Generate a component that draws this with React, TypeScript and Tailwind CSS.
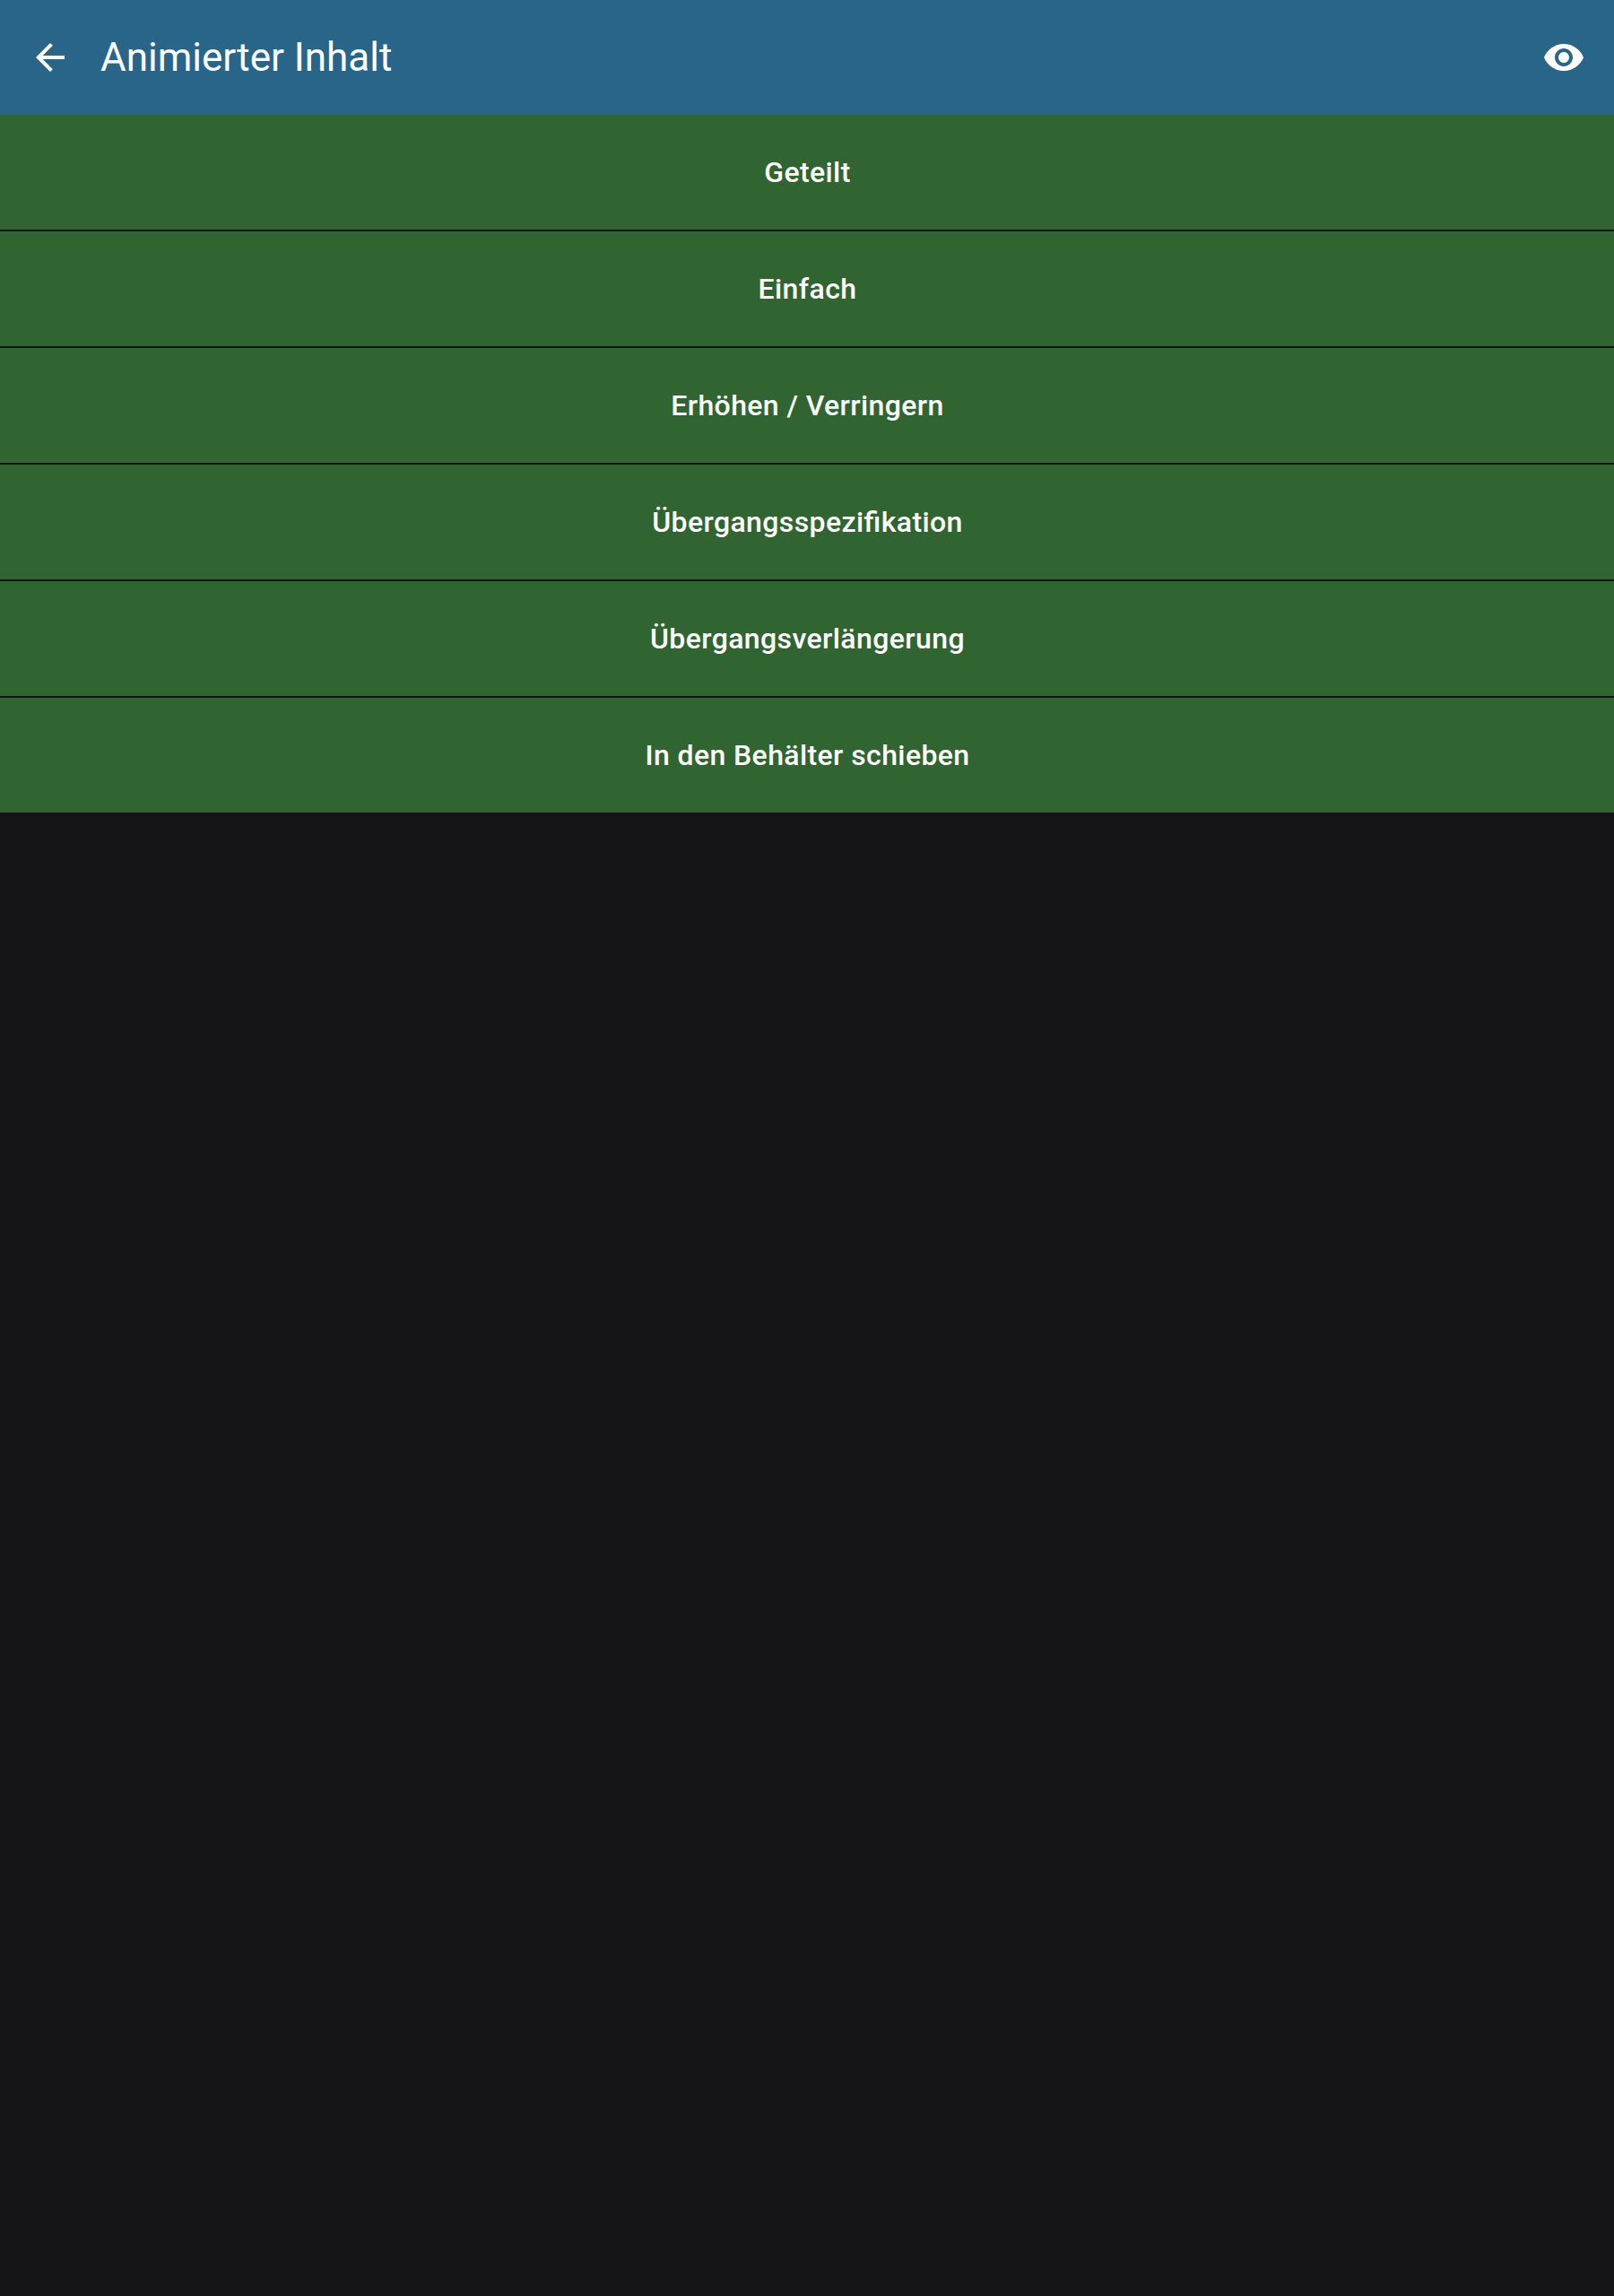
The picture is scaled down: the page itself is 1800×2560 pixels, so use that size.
const items = [
  "Geteilt",
  "Einfach",
  "Erhöhen / Verringern",
  "Übergangsspezifikation",
  "Übergangsverlängerung",
  "In den Behälter schieben",
];

export default function App() {
  return (
    <div className="h-[2560px] w-[1800px] bg-[#141318] font-['Roboto',sans-serif] text-white">
      <header className="flex h-32 items-center bg-[#286589] px-8">
        <svg className="size-12" viewBox="0 0 24 24" fill="currentColor">
          <path d="M20 11H7.83l5.59-5.59L12 4l-8 8 8 8 1.41-1.41L7.83 13H20v-2z" />
        </svg>
        <h1 className="ml-8 text-[44px] leading-none font-normal">Animierter Inhalt</h1>
        <svg className="ml-auto size-12" viewBox="0 0 24 24" fill="currentColor">
          <path d="M12 4.5C7 4.5 2.73 7.61 1 12c1.73 4.39 6 7.5 11 7.5s9.27-3.11 11-7.5c-1.73-4.39-6-7.5-11-7.5zM12 17c-2.76 0-5-2.24-5-5s2.24-5 5-5 5 2.24 5 5-2.24 5-5 5zm0-8c-1.66 0-3 1.34-3 3s1.34 3 3 3 3-1.34 3-3-1.34-3-3-3z" />
        </svg>
      </header>
      <ul className="flex flex-col gap-[2px]">
        {items.map((item) => (
          <li
            key={item}
            className="flex h-32 items-center justify-center bg-[#306430] pl-px text-[32px] font-medium tracking-[0.4px] [font-feature-settings:'liga'_1]"
          >
            {item}
          </li>
        ))}
      </ul>
    </div>
  );
}
